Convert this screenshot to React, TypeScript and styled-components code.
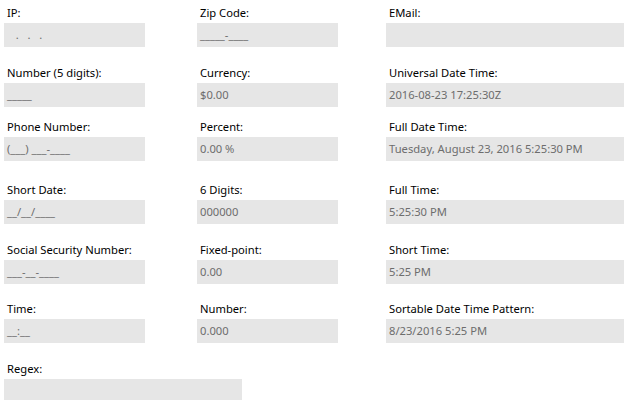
import React from "react";
import styled, { createGlobalStyle } from "styled-components";

const GlobalStyle = createGlobalStyle`
  html, body {
    margin: 0;
    padding: 0;
    background: #ffffff;
  }
  body {
    font-family: "Noto Sans", "Open Sans", sans-serif;
    -webkit-font-smoothing: antialiased;
  }
`;

const Form = styled.div`
  display: grid;
  grid-template-columns: 193px 189px 238px;
  grid-template-rows: 60px 54px 63px 60px 59px 60px auto;
  padding: 5px 0 0 4px;
  width: 641px;
  height: 400px;
  box-sizing: border-box;
  overflow: hidden;
`;

const Field = styled.div<{ $span?: number }>`
  display: flex;
  flex-direction: column;
  grid-column: span ${(p) => p.$span ?? 1};
`;

const Label = styled.div`
  height: 18px;
  line-height: 16px;
  padding-left: 3px;
  font-size: 11.2px;
  color: #000000;
  white-space: nowrap;
`;

const Box = styled.div<{ $width: number }>`
  width: ${(p) => p.$width}px;
  height: 24px;
  flex-shrink: 0;
  line-height: 24px;
  background: #e6e6e6;
  color: #6d6d6d;
  font-size: 11.2px;
  padding-left: 3px;
  box-sizing: border-box;
  white-space: pre;
  overflow: hidden;
`;

type F = { label: string; value: string; width: number; span?: number };

const fields: F[] = [
  { label: "IP:", value: "   .   .   .   ", width: 141 },
  { label: "Zip Code:", value: "_____-____", width: 141 },
  { label: "EMail:", value: "", width: 238 },
  { label: "Number (5 digits):", value: "_____", width: 141 },
  { label: "Currency:", value: "$0.00", width: 141 },
  { label: "Universal Date Time:", value: "2016-08-23 17:25:30Z", width: 238 },
  { label: "Phone Number:", value: "(___) ___-____", width: 141 },
  { label: "Percent:", value: "0.00 %", width: 141 },
  { label: "Full Date Time:", value: "Tuesday, August 23, 2016 5:25:30 PM", width: 238 },
  { label: "Short Date:", value: "__/__/____", width: 141 },
  { label: "6 Digits:", value: "000000", width: 141 },
  { label: "Full Time:", value: "5:25:30 PM", width: 238 },
  { label: "Social Security Number:", value: "___-__-____", width: 141 },
  { label: "Fixed-point:", value: "0.00", width: 141 },
  { label: "Short Time:", value: "5:25 PM", width: 238 },
  { label: "Time:", value: "__:__", width: 141 },
  { label: "Number:", value: "0.000", width: 141 },
  { label: "Sortable Date Time Pattern:", value: "8/23/2016 5:25 PM", width: 238 },
  { label: "Regex:", value: "", width: 238, span: 2 },
];

export default function App() {
  return (
    <>
      <GlobalStyle />
      <Form>
        {fields.map((f) => (
          <Field key={f.label} $span={f.span}>
            <Label>{f.label}</Label>
            <Box $width={f.width}>{f.value}</Box>
          </Field>
        ))}
      </Form>
    </>
  );
}
